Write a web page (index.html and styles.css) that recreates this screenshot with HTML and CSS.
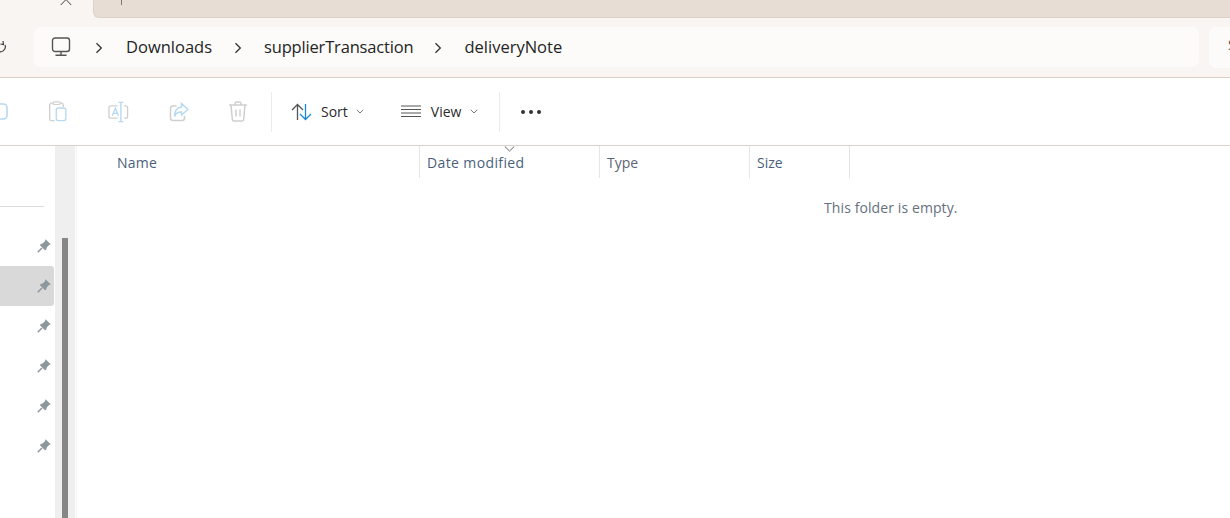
FILE: index.html
```html
<!DOCTYPE html>
<html lang="en">
<head>
<meta charset="utf-8">
<title>deliveryNote - File Explorer</title>
<link rel="stylesheet" href="styles.css">
</head>
<body>
<div class="window">
  <header class="tabstrip">
    <div class="tab-active">
      <svg class="tab-close" width="12" height="6" viewBox="0 0 12 6"><path d="M.8 5 L6 -.5 L11.200 5" fill="none" stroke="#444" stroke-width="1"/></svg>
    </div>
    <div class="tab-rest"><span class="tab-plus"></span></div>
  </header>
  <nav class="addressrow">
    <svg class="refresh" width="6" height="14" viewBox="0 0 6 14"><path d="M-3 11.5 A5 5 0 0 0 5 6 M3 2 L3.5 5.5 L0.5 5" fill="none" stroke="#333" stroke-width="1.1"/></svg>
    <div class="breadcrumb">
      <svg class="pc" width="20" height="20" viewBox="0 0 20 20"><rect x="1.5" y="1" width="17" height="13.5" rx="2.5" fill="none" stroke="#555" stroke-width="1.4"/><path d="M10 14.5V18M4.5 18.2h11" fill="none" stroke="#555" stroke-width="1.4"/></svg>
      <svg class="chev chev-first" width="8" height="12" viewBox="0 0 8 12"><path d="M1.5 1.2 L6.3 6 L1.5 10.8" fill="none" stroke="#333" stroke-width="1.3"/></svg>
      <span class="crumb">Downloads</span>
      <svg class="chev" width="8" height="12" viewBox="0 0 8 12"><path d="M1.5 1.2 L6.3 6 L1.5 10.8" fill="none" stroke="#333" stroke-width="1.3"/></svg>
      <span class="crumb crumb-long">supplierTransaction</span>
      <svg class="chev" width="8" height="12" viewBox="0 0 8 12"><path d="M1.5 1.2 L6.3 6 L1.5 10.8" fill="none" stroke="#333" stroke-width="1.3"/></svg>
      <span class="crumb">deliveryNote</span>
    </div>
    <div class="searchbox"><span class="search-letter">S</span></div>
  </nav>
  <section class="toolbar">
    <div class="tool-group">
      <svg class="copy-cut" width="9" height="22" viewBox="0 0 9 22"><rect x="-8" y="3" width="15" height="15" rx="3.5" fill="none" stroke="#b5d8f3" stroke-width="1.6"/></svg>
      <svg class="t-paste" width="20" height="21" viewBox="0 0 22 24"><path d="M7 22.5H3.5a2 2 0 0 1-2-2V4.5a2 2 0 0 1 2-2H15a2 2 0 0 1 2 2V7" fill="none" stroke="#cfcfcf" stroke-width="1.5"/><rect x="5.5" y="1" width="8" height="3" rx="1.2" fill="#fff" stroke="#cfcfcf" stroke-width="1.3"/><rect x="9" y="8" width="11" height="14.5" rx="2.4" fill="none" stroke="#b5d8f3" stroke-width="1.5"/></svg>
      <svg class="t-rename" width="21" height="22" viewBox="0 0 22 22"><path d="M10 4.5H3a2 2 0 0 0-2 2v9a2 2 0 0 0 2 2h7M17 4.5h1.5a2 2 0 0 1 2 2v9a2 2 0 0 1-2 2H17" fill="none" stroke="#cfcfcf" stroke-width="1.4"/><path d="M11 1h5M11 21h5M13.5 1v20" fill="none" stroke="#b5d8f3" stroke-width="1.4"/><path d="M4.5 15 L7.7 7 L11 15 M5.7 12.5h4" fill="none" stroke="#b5d8f3" stroke-width="1.3"/></svg>
      <svg class="t-share" width="20" height="20" viewBox="0 0 20 20"><path d="M7.5 4H4a2.5 2.5 0 0 0-2.5 2.5v9.5a2.5 2.5 0 0 0 2.500 2.500H13a2.500 2.500 0 0 0 2.500-2.500V14" fill="none" stroke="#cfcfcf" stroke-width="1.500"/><path d="M12.500 1.500 L19 7.500 L12.500 13 V10 C9 10 6.500 11.500 5.500 14.500 C5.500 9 8 5.500 12.500 5 Z" fill="none" stroke="#b5d8f3" stroke-width="1.400"/></svg>
      <svg class="t-trash" width="20" height="21" viewBox="0 0 20 21"><path d="M1 4h18M7 4V2.500A1.500 1.500 0 0 1 8.500 1h3A1.500 1.500 0 0 1 13 2.500V4M3 4l1.300 14a2 2 0 0 0 2 2h7.400a2 2 0 0 0 2-2L17 4M8 8.500v7M12 8.500v7" fill="none" stroke="#cfcfcf" stroke-width="1.500"/></svg>
    </div>
    <span class="tool-sep"></span>
    <div class="tool-btn tool-sort">
      <svg width="21" height="18" viewBox="0 0 21 18"><path d="M6.500 17V1.500M1 7l5.500-5.500L12 7" fill="none" stroke="#555" stroke-width="1.300"/><path d="M14.500 1v15.500M9 11l5.500 5.500L20 11" fill="none" stroke="#1a86d8" stroke-width="1.300"/></svg>
      <span class="tool-label">Sort</span>
      <svg class="caret" width="8" height="5" viewBox="0 0 8 5"><path d="M.8 .8 L4 4 L7.200 .8" fill="none" stroke="#777" stroke-width="1"/></svg>
    </div>
    <div class="tool-btn tool-view">
      <svg width="20" height="13" viewBox="0 0 20 13"><path d="M0 1h20M0 4.500h20M0 8h20M0 11.500h20" fill="none" stroke="#555" stroke-width="1"/></svg>
      <span class="tool-label">View</span>
      <svg class="caret" width="8" height="5" viewBox="0 0 8 5"><path d="M.8 .8 L4 4 L7.200 .8" fill="none" stroke="#777" stroke-width="1"/></svg>
    </div>
    <span class="tool-sep tool-sep-2"></span>
    <div class="more"><i></i><i></i><i></i></div>
  </section>
  <main class="body">
    <aside class="sidebar">
      <div class="side-divider"></div>
      <ul class="pinned">
        <li class="pin-row"><svg class="pin" viewBox="0 0 14 14"><use href="#pin"/></svg></li>
        <li class="pin-row selected"><svg class="pin" viewBox="0 0 14 14"><use href="#pin"/></svg></li>
        <li class="pin-row"><svg class="pin" viewBox="0 0 14 14"><use href="#pin"/></svg></li>
        <li class="pin-row"><svg class="pin" viewBox="0 0 14 14"><use href="#pin"/></svg></li>
        <li class="pin-row"><svg class="pin" viewBox="0 0 14 14"><use href="#pin"/></svg></li>
        <li class="pin-row"><svg class="pin" viewBox="0 0 14 14"><use href="#pin"/></svg></li>
      </ul>
    </aside>
    <div class="scrolltrack"><div class="scrollthumb"></div></div>
    <section class="content">
      <div class="columns">
        <div class="col col-name">Name</div>
        <div class="col col-date">Date modified
          <svg class="sort-caret" width="11" height="6" viewBox="0 0 11 6"><path d="M.8 .5 L5.500 5 L10.200 .5" fill="none" stroke="#666" stroke-width="1"/></svg>
        </div>
        <div class="col col-type">Type</div>
        <div class="col col-size">Size</div>
      </div>
      <p class="empty">This folder is empty.</p>
    </section>
  </main>
</div>
<svg class="defs" width="0" height="0"><defs><symbol id="pin" viewBox="0 0 14 14"><path d="M8.500 .3 L13.700 5.300 L11.800 6.300 L9.700 8.600 L9.300 10.600 L8 11.200 L3 6.200 L3.600 5 L5.600 4.600 L7.800 2.400 Z" fill="#8c979e"/><path d="M5 9 L.7 13.300" stroke="#8c979e" stroke-width="1.500"/></symbol></defs></svg>
</body>
</html>
```
FILE: styles.css
```css
* { box-sizing: border-box; }
html, body { margin: 0; padding: 0; height: 100%; overflow: hidden; background: #fff; }
body { font-family: "Open Sans", "Noto Sans", "Liberation Sans", sans-serif; color: #1f1f1f; }
.window { display: flex; flex-direction: column; height: 518px; width: 1230px; overflow: hidden; }
.defs { position: absolute; }

.tabstrip { display: flex; height: 18px; flex: none; background: #f8f5f2; }
.tab-active { width: 93px; display: flex; justify-content: flex-end; padding-right: 21px; align-items: flex-start; }
.tab-rest { flex: 1; background: #e7ddd5; border-bottom: 1px solid #dcd2ca; border-left: 1px solid #dcd2ca; border-bottom-left-radius: 6px; padding-left: 27px; }
.tab-plus { display: block; width: 1px; height: 5px; background: #777; }

.addressrow { display: flex; height: 60px; flex: none; align-items: flex-start; background: #f8f5f2; border-bottom: 1px solid #d8cec7; padding-top: 9px; }
.refresh { margin-top: 12px; flex: none; }
.breadcrumb { margin-left: 28px; width: 1165px; height: 40px; background: #fcfbf9; border-radius: 7px; display: flex; align-items: center; padding-left: 17px; flex: none; }
.pc { flex: none; margin-right: 23px; }
.chev { flex: none; margin: 1px 0 0 2px; }
.chev-first { margin: 1px 23px 0 1px; }
.crumb { font-size: 16.5px; color: #242424; line-height: 22px; margin-right: 20px; }
.crumb-long { letter-spacing: -0.17px; margin-right: 19px; }
.crumb + .chev { margin-right: 22px; }
.searchbox { margin-left: 10px; width: 40px; height: 41px; background: #fcfbf9; border-radius: 7px 0 0 7px; padding: 9px 0 0 19px; }
.search-letter { font-size: 14px; color: #555; display: block; line-height: 18px; }

.toolbar { display: flex; height: 68px; flex: none; align-items: center; background: #fff; border-bottom: 1px solid #d8d2cc; }
.tool-group { display: flex; align-items: center; width: 271px; flex: none; }
.copy-cut { flex: none; }
.t-paste { margin-left: 39px; flex: none; }
.t-rename { margin-left: 40px; flex: none; }
.t-share { margin-left: 40px; flex: none; }
.t-trash { margin-left: 39px; flex: none; }
.tool-sep { width: 1px; height: 40px; background: #ebebeb; flex: none; }
.tool-btn { display: flex; align-items: center; flex: none; }
.tool-label { font-size: 14px; color: #2b2b2b; line-height: 20px; }
.tool-sort { margin-left: 19px; }
.tool-sort .tool-label { margin-left: 9px; }
.tool-view { margin-left: 37px; }
.tool-view .tool-label { margin-left: 10px; }
.caret { margin-left: 8px; }
.tool-view .caret { margin-left: 9px; }
.tool-sep-2 { margin-left: 21px; }
.more { display: flex; gap: 4px; margin-left: 21px; }
.more i { width: 4px; height: 4px; border-radius: 50%; background: #333; display: block; }

.body { display: flex; flex: 1; min-height: 0; }
.sidebar { width: 55px; flex: none; padding-top: 60px; }
.side-divider { width: 44px; height: 1px; background: #dcdcdc; }
.pinned { list-style: none; margin: 19px 0 0; padding: 0; }
.pin-row { height: 40px; width: 54px; display: flex; align-items: center; justify-content: flex-end; padding-right: 3px; }
.pin-row.selected { background: #d9d9d9; border-radius: 0 3px 3px 0; }
.pin { width: 14px; height: 14px; display: block; }

.scrolltrack { width: 20px; flex: none; background: #efefef; padding: 92px 7px 0; }
.scrollthumb { width: 6px; height: 100%; background: #868686; }

.content { flex: 1; border-left: 1px solid #f3f3f3; margin-left: 1px; min-width: 0; }
.columns { display: flex; height: 32px; font-size: 14px; color: #4a5f7c; }
.col { height: 32px; border-right: 1px solid #e5e5e5; line-height: 33px; padding-left: 7px; flex: none; position: relative; }
.col-name { width: 343px; padding-left: 40px; letter-spacing: .2px; }
.col-date { width: 180px; letter-spacing: .38px; }
.col-type { width: 150px; color: #5b6573; }
.col-size { width: 100px; }
.sort-caret { position: absolute; left: 84px; top: 0; }
.empty { margin: 21px 0 0; font-size: 14px; line-height: 18px; color: #66707d; padding-left: 747px; letter-spacing: .1px; }
```
